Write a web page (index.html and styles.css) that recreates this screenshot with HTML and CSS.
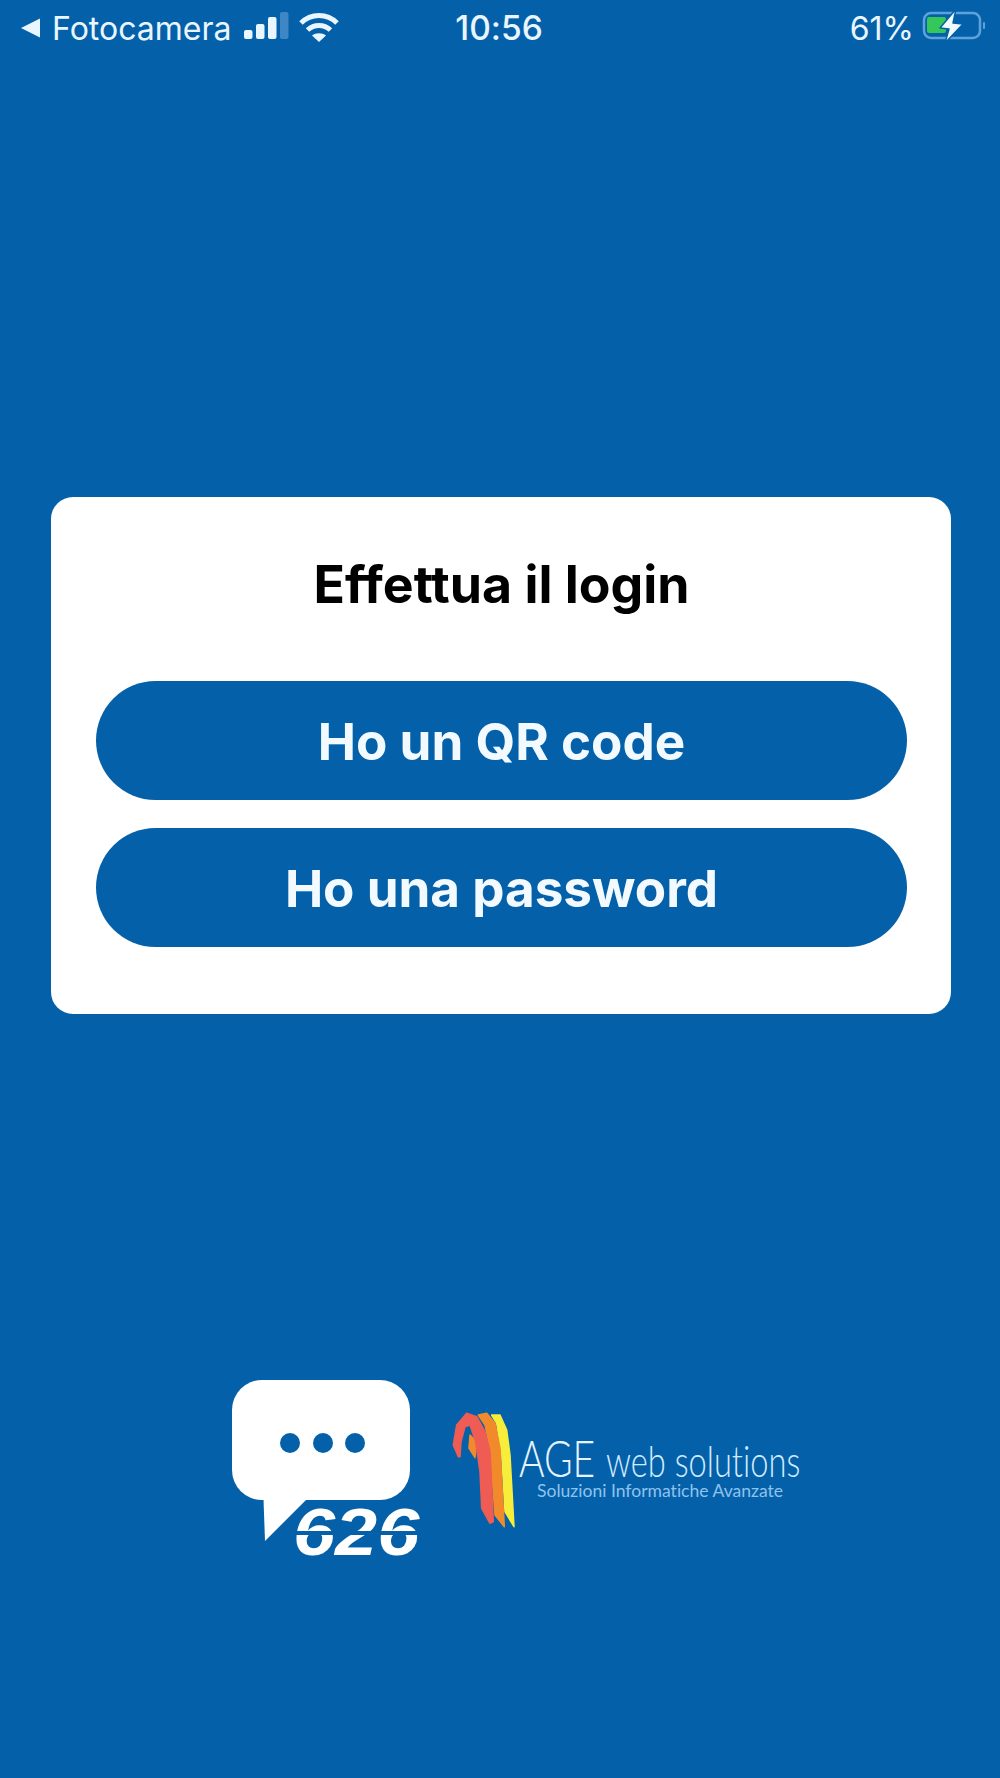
FILE: index.html
```html
<!DOCTYPE html>
<html lang="it">
<head>
  <meta charset="UTF-8">
  <meta name="viewport" content="width=device-width, initial-scale=1.0">
  <title>Login</title>
  <link rel="stylesheet" href="styles.css">
</head>
<body>

<div class="status-bar">
  <div class="status-left">
    <svg class="back-arrow" width="21" height="22" viewBox="0 0 21 22"><path d="M20 1.5V20.5L1 11Z" fill="#eaf6ff"/></svg>
    <span class="status-text">Fotocamera</span>
    <svg class="signal" width="45" height="32" viewBox="0 0 45 32">
      <rect x="0" y="18" width="8.5" height="9" rx="2" fill="#eaf6ff"/>
      <rect x="12" y="12" width="8.5" height="15" rx="2" fill="#eaf6ff"/>
      <rect x="24" y="5" width="8.5" height="22" rx="2" fill="#eaf6ff"/>
      <rect x="36" y="0" width="8.5" height="27" rx="2" fill="#3f86c4"/>
    </svg>
    <svg class="wifi" width="40" height="32" viewBox="0 0 40 32" fill="none" stroke="#eaf6ff" stroke-width="5">
      <path d="M2 11C12 1 28 1 38 11"/>
      <path d="M8.5 18C15 12 25 12 31.5 18"/>
      <path d="M20 30L13 23.5C17 20.5 23 20.5 27 23.5Z" fill="#eaf6ff" stroke="none"/>
    </svg>
  </div>
  <div class="status-time">10:56</div>
  <div class="status-right">
    <span class="status-text">61%</span>
    <svg class="battery" width="66" height="36" viewBox="0 0 66 36">
      <rect x="4" y="5" width="56" height="25" rx="7" fill="none" stroke="#5fa2da" stroke-width="2.5"/>
      <rect x="7" y="9" width="19" height="16" rx="2" fill="#35c759"/>
      <rect x="63" y="14" width="2" height="7" rx="1" fill="#5fa2da"/>
      <path d="M36 1L20 20L29 21L25 35L43 16L33 15Z" fill="#f4fbff" stroke="#0461a9" stroke-width="1.5" stroke-linejoin="round"/>
    </svg>
  </div>
</div>

<div class="login-card">
  <h1 class="login-title">Effettua il login</h1>
  <button class="login-btn">Ho un QR code</button>
  <button class="login-btn">Ho una password</button>
</div>

<div class="logos">
  <svg class="logo-626" width="205" height="190" viewBox="0 0 205 190">
    <rect x="7" y="5" width="178" height="120" rx="30" fill="#fff"/>
    <path d="M38 110L40 166L84 122Z" fill="#fff"/>
    <circle cx="65" cy="68" r="10" fill="#0461a9"/>
    <circle cx="98" cy="68" r="10" fill="#0461a9"/>
    <circle cx="130" cy="68" r="10" fill="#0461a9"/>
    <text class="logo-626-text" transform="translate(68 180) scale(1.13 1)">626</text>
    <path d="M62 160L198 160L200 156L64 156Z" fill="#0461a9"/>
  </svg>
  <svg class="logo-age" width="360" height="125" viewBox="0 0 360 125">
    <g stroke-width="1.5" stroke-linejoin="round">
      <path d="M41.7 5L50 5L56.7 20L60 45L64 116.7L55 101.7L51.7 45L46.7 13.3Z" fill="#f7ee3c" stroke="#f7ee3c"/>
      <path d="M28.3 5L36.7 3.3L45 13.3L50 38.3L54.3 116.7L45 105L40 38.3L35 15Z" fill="#f28a2c" stroke="#f28a2c"/>
      <path d="M20 25L19 38L25 47.7L26.7 31.7Z" fill="#f28a2c" stroke="#f28a2c"/>
      <path d="M8.3 46.7L3.3 35L6.7 15L16.7 3.3L26.7 6.7L35 21.7L40 41.7L43.3 111.7L40 113.3L31.7 98.3L30 61.7L25.7 31.7L20 15L15 16.7L11 31.7L10 46.7Z" fill="#ee5c54" stroke="#ee5c54"/>
    </g>
    <text class="logo-age-big" transform="translate(69 67) scale(.75 1)">AGE</text>
    <text class="logo-age-web" transform="translate(156 67) scale(.742 1)">web solutions</text>
    <text class="logo-age-sub" transform="translate(87 87) scale(.976 1)">Soluzioni Informatiche Avanzate</text>
  </svg>
</div>

</body>
</html>
```

FILE: styles.css
```css
* {
  box-sizing: border-box;
}
body {
  margin: 0;
  height: 1778px;
  overflow: hidden;
  background-color: #0461a9;
  font-family: Inter, "Noto Sans", sans-serif;
  font-variant-ligatures: none;
}
.status-bar {
  display: grid;
  grid-template-columns: 1fr auto 1fr;
  align-items: center;
  height: 56px;
  padding: 0 14px 0 20px;
  color: #eaf6ff;
  font-size: 32px;
}
.status-left {
  display: flex;
  align-items: center;
}
.status-right {
  display: flex;
  align-items: center;
  justify-content: flex-end;
}
.status-text {
  font-family: Inter, sans-serif;
}
.back-arrow {
  margin-right: 11px;
}
.signal {
  margin-left: 13px;
}
.wifi {
  margin-left: 10px;
}
.status-time {
  font-size: 33.5px;
  font-weight: 500;
  margin-left: -8px;
}
.battery {
  margin: 0 0 4px 6px;
}
.login-card {
  display: flex;
  flex-direction: column;
  align-items: center;
  width: 900px;
  height: 517px;
  margin: 441px 0 0 51px;
  padding: 56px 44px 0 45px;
  background-color: #fff;
  border-radius: 22px;
}
.login-title {
  margin: 0 0 66px;
  font-size: 51.8px;
  line-height: 62px;
  font-weight: 700;
  color: #000;
}
.login-btn {
  width: 100%;
  height: 119px;
  margin-bottom: 28px;
  border: 0;
  border-radius: 60px;
  background-color: #0461a9;
  color: #f2faff;
  font-family: Inter, sans-serif;
  font-size: 51.2px;
  font-weight: 700;
  font-variant-ligatures: none;
}
.logos {
  display: flex;
  align-items: flex-start;
  margin: 361px 0 0 225px;
}
.logo-626 {
  flex: none;
}
.logo-626-text {
  font-family: "Liberation Sans", sans-serif;
  font-size: 67px;
  font-weight: 700;
  font-style: italic;
  fill: #fff;
}
.logo-age {
  flex: none;
  margin: 35px 0 0 20px;
}
.logo-age text {
  font-family: Lato, sans-serif;
  font-variant-ligatures: none;
}
.logo-age-big {
  font-size: 52px;
  font-weight: 300;
  fill: #e6f4ff;
}
.logo-age-web {
  font-size: 44px;
  font-weight: 300;
  fill: #d2ebff;
}
.logo-age-sub {
  font-size: 18px;
  font-weight: 400;
  fill: #8fc3ee;
}
```
